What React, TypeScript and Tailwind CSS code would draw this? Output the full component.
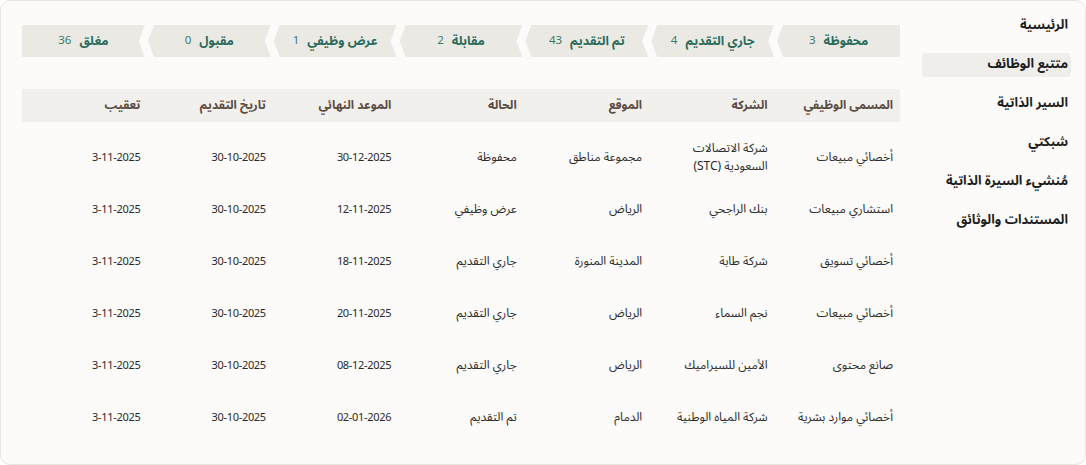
const nav = [
  "الرئيسية",
  "متتبع الوظائف",
  "السير الذاتية",
  "شبكتي",
  "مُنشيء السيرة الذاتية",
  "المستندات والوثائق",
];

const stages = [
  { name: "محفوظة", count: 3 },
  { name: "جاري التقديم", count: 4 },
  { name: "تم التقديم", count: 43 },
  { name: "مقابلة", count: 2 },
  { name: "عرض وظيفي", count: 1 },
  { name: "مقبول", count: 0 },
  { name: "مغلق", count: 36 },
];

const headers = ["المسمى الوظيفي", "الشركة", "الموقع", "الحالة", "الموعد النهائي", "تاريخ التقديم", "تعقيب"];

const rows = [
  ["أخصائي مبيعات", "شركة الاتصالات السعودية (STC)", "مجموعة مناطق", "محفوظة", "30-12-2025", "30-10-2025", "3-11-2025"],
  ["استشاري مبيعات", "بنك الراجحي", "الرياض", "عرض وظيفي", "12-11-2025", "30-10-2025", "3-11-2025"],
  ["أخصائي تسويق", "شركة طابة", "المدينة المنورة", "جاري التقديم", "18-11-2025", "30-10-2025", "3-11-2025"],
  ["أخصائي مبيعات", "نجم السماء", "الرياض", "جاري التقديم", "20-11-2025", "30-10-2025", "3-11-2025"],
  ["صانع محتوى", "الأمين للسيراميك", "الرياض", "جاري التقديم", "08-12-2025", "30-10-2025", "3-11-2025"],
  ["أخصائي موارد بشرية", "شركة المياه الوطنية", "الدمام", "تم التقديم", "02-01-2026", "30-10-2025", "3-11-2025"],
];

// chevron shapes: point on the left, notch on the right (rtl flow)
const clipFirst = "[clip-path:polygon(6px_0,100%_0,100%_100%,6px_100%,0_50%)]";
const clipMid = "[clip-path:polygon(6px_0,100%_0,calc(100%-6px)_50%,100%_100%,6px_100%,0_50%)]";
const clipLast = "[clip-path:polygon(0_0,100%_0,calc(100%-6px)_50%,100%_100%,0_100%)]";

export default function App() {
  return (
    <div className="w-[1086px] h-[465px] bg-white font-['Noto_Sans_Arabic','Noto_Kufi_Arabic','Noto_Sans',sans-serif]">
      <div dir="rtl" className="h-[465px] rounded-[10px] border border-[#e7e5e0] bg-[#fcfbf9] flex pt-[13px] pr-[14px] pl-[21px]">
        <aside className="w-[149px] shrink-0 flex flex-col gap-[15px]">
          {nav.map((item, i) => (
            <div
              key={item}
              className={`h-[24px] flex items-center pr-[3px] rounded-[4px] text-[13px] font-bold text-[#1d1d1d] ${i === 1 ? "bg-[#f0eeea]" : ""}`}
            >
              {item}
            </div>
          ))}
        </aside>

        <main className="flex-1 mr-[22px] pt-[11px]">
          <div className="flex gap-[3px] h-[32px]">
            {stages.map((s, i) => (
              <div
                key={s.name}
                className={`flex-1 bg-[#ebe9e4] flex items-center justify-center gap-[8px] ${
                  i === 0 ? clipFirst : i === stages.length - 1 ? clipLast : clipMid
                }`}
              >
                <span className="text-[12.5px] font-bold text-[#2c6b5b]">{s.name}</span>
                <span className="text-[11.5px] text-[#3c7a6a]">{s.count}</span>
              </div>
            ))}
          </div>

          <div className="mt-[32px]">
            <div className="grid grid-cols-7 h-[33px] bg-[#f2f0ec] items-center">
              {headers.map((h) => (
                <div key={h} className="pr-[7px] text-[12px] font-bold text-[#5b4c44]">
                  {h}
                </div>
              ))}
            </div>
            <div className="pt-[10px]">
              {rows.map((r, ri) => (
                <div key={ri} className="grid grid-cols-7 h-[52px] items-center">
                  {r.map((c, ci) => (
                    <div
                      key={ci}
                      className={`pr-[7px] pl-[10px] leading-[18px] text-[#2a2a2a] ${ci >= 4 ? "text-[11px] tracking-[-0.3px]" : "text-[12px]"}`}
                    >
                      {c}
                    </div>
                  ))}
                </div>
              ))}
            </div>
          </div>
        </main>
      </div>
    </div>
  );
}
